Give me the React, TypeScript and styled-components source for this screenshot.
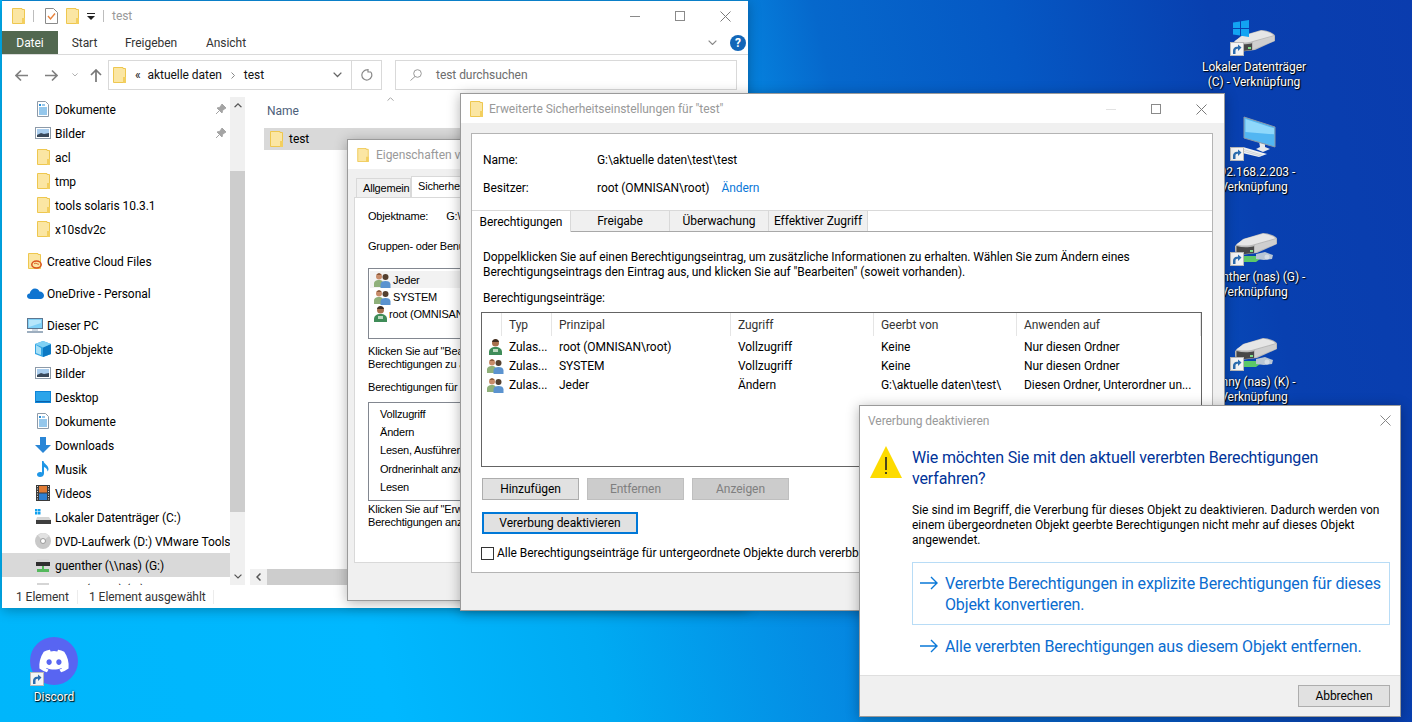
import React from "react";
import styled, { createGlobalStyle } from "styled-components";
import { FaDiscord } from "react-icons/fa6";

const Global = createGlobalStyle`
  html, body { margin: 0; padding: 0; height: 100%; overflow: hidden; }
  body { font-family: Roboto, "Noto Sans", sans-serif; font-size: 12px; color: #000; letter-spacing: -0.05px; }
  * { box-sizing: border-box; }
`;

const Desktop = styled.div`
  position: relative;
  width: 1412px;
  height: 722px;
  overflow: hidden;
  background: linear-gradient(77deg, #00b6fb 0%, #00b8ff 25%, #00aaf2 39%, #0585e0 56%, #0668cc 62%, #0558c4 74%, #0840b0 87%, #0a3cae 100%);
`;

const Win = styled.div<{ $x: number; $y: number; $w: number; $h: number }>`
  position: absolute;
  left: ${(p) => p.$x}px;
  top: ${(p) => p.$y}px;
  width: ${(p) => p.$w}px;
  height: ${(p) => p.$h}px;
  background: #fff;
  display: flex;
  flex-direction: column;
  overflow: hidden;
  box-shadow: 0 2px 12px rgba(0, 0, 0, 0.3);
`;

const ExplorerWin = styled(Win)`
  border-top: 1px solid #0a7fc8;
`;
const FramedWin = styled(Win)`
  border: 1px solid #9a9a9a;
`;

/* ---------- icons ---------- */
const Svg = styled.svg`
  display: block;
  flex: none;
`;

const Folder = ({ w = 13, h = 16 }: { w?: number; h?: number }) => (
  <Svg width={w} height={h} viewBox="0 0 13 16">
    <path d="M.5.5h9.500l0 1h2.500v14H.5z" fill="#fbe6a3" stroke="#eec74f" />
    <rect x="10" y="10" width="3" height="6" fill="#f3cf5f" />
  </Svg>
);

const TaskDoc = () => (
  <Svg width="13" height="16" viewBox="0 0 13 16">
    <path d="M.5.5h8l4 4v11H.5z" fill="#fff" stroke="#8a8a8a" />
    <path d="M3 8l2.500 3L10 5.500" fill="none" stroke="#e8823c" strokeWidth="1.400" />
  </Svg>
);

const DocIcon = () => (
  <Svg width="14" height="16" viewBox="0 0 14 16">
    <path d="M1.500.5h8l3 3v12h-11z" fill="#fff" stroke="#8d9aa8" />
    <path d="M6 4h3M3 7h8M3 9h8M3 11h8M3 13h8" stroke="#2b8fd8" />
    <path d="M3 3l2 2M3 5l2-2" stroke="#2b8fd8" />
  </Svg>
);

const PicIcon = () => (
  <Svg width="16" height="12" viewBox="0 0 16 12">
    <rect x=".5" y=".5" width="15" height="11" fill="#fff" stroke="#8d9aa8" />
    <rect x="2" y="2" width="12" height="8" fill="#a9cdee" />
    <path d="M2 8l4-2 3 1 5-1v4H2z" fill="#39485a" />
  </Svg>
);

const CloudIcon = () => (
  <Svg width="17" height="11" viewBox="0 0 17 11">
    <path d="M3.500 11C1.500 11 0 9.800 0 8.200c0-1.500 1-2.500 2.700-2.700C3.300 2.500 5.500.5 8 .5c2 0 3.800 1.200 4.500 3 2.500 0 4.500 1.800 4.500 4 0 2-1.500 3.500-3.500 3.500z" fill="#0f74d0" />
  </Svg>
);

const CcIcon = () => (
  <Svg width="14" height="16" viewBox="0 0 14 16">
    <path d="M.5.5h9.500v1h2.500v14H.5z" fill="#fbe6a3" stroke="#eec74f" />
    <ellipse cx="8.500" cy="11.500" rx="4.700" ry="3.500" fill="none" stroke="#d9531e" strokeWidth="1.500" />
    <path d="M6 11c2-2 4 1 5 0" fill="none" stroke="#d9531e" />
  </Svg>
);

const PcIcon = () => (
  <Svg width="16" height="15" viewBox="0 0 16 15">
    <rect x=".5" y=".5" width="15" height="10" fill="#7fd0f7" stroke="#5d7690" />
    <path d="M2 2h12v3L2 9z" fill="#b6e6fb" />
    <path d="M0 14h16" stroke="#7d93aa" strokeWidth="1.500" />
    <path d="M5 12h6" stroke="#9db2c6" />
  </Svg>
);

const CubeIcon = () => (
  <Svg width="16" height="16" viewBox="0 0 16 16">
    <path d="M8 0l8 3v10l-8 3-8-3V3z" fill="#35a5e3" />
    <path d="M8 6.500V16l8-3V3z" fill="#0c79c4" />
    <path d="M0 3l8 3.500L16 3 8 0z" fill="#7fd0f4" />
    <path d="M1 4v8l5 2V7z" fill="#a6e0f7" />
  </Svg>
);

const DesktopIcon = () => (
  <Svg width="16" height="12" viewBox="0 0 16 12">
    <rect width="16" height="12" fill="#0f85d8" />
    <rect x="1" y="1" width="14" height="9" fill="#2ba4ea" />
    <rect x="1" y="10" width="14" height="1" fill="#0b60a8" />
  </Svg>
);

const DownIcon = () => (
  <Svg width="16" height="16" viewBox="0 0 16 16">
    <path d="M5 0h6v8h5l-8 8-8-8h5z" fill="#2a86d6" />
  </Svg>
);

const MusicIcon = () => (
  <Svg width="12" height="16" viewBox="0 0 12 16">
    <path d="M5 0h1.500c.3 3 5 4 5 8 0 1-.5 2-1 2.500.2-2.500-2.200-4-3.500-4.500v6.500C7 15 5 16 3 16S0 15 0 13.500 1.500 11 3 11c.8 0 1.500.1 2 .4z" fill="#1f96e6" />
  </Svg>
);

const VideoIcon = () => (
  <Svg width="14" height="16" viewBox="0 0 14 16">
    <rect width="14" height="16" fill="#3a3a3a" />
    <rect x="3" y="1" width="8" height="6.500" fill="#e07b34" />
    <rect x="3" y="8.500" width="8" height="6.500" fill="#2f7fd0" />
    <path d="M1 1.500h1M1 4h1M1 6.500h1M1 9h1M1 11.500h1M1 14h1M12 1.500h1M12 4h1M12 6.500h1M12 9h1M12 11.500h1M12 14h1" stroke="#ddd" />
  </Svg>
);

const LocalDriveIcon = () => (
  <Svg width="16" height="16" viewBox="0 0 16 16">
    <path d="M0 0h2.500v2.500H0zM3 0h2.500v2.500H3zM0 3h2.500v2.500H0zM3 3h2.500v2.500H3z" fill="#10a0ee" />
    <path d="M2 8h12l2 3v4H1v-4z" fill="#d5d5d5" />
    <rect x="1" y="11" width="15" height="4" fill="#3e3e3e" />
  </Svg>
);

const DvdIcon = () => (
  <Svg width="16" height="16" viewBox="0 0 16 16">
    <circle cx="8" cy="8" r="8" fill="#c9c9c9" />
    <path d="M8 0a8 8 0 0 1 6 3L8 8 3 2.500A8 8 0 0 1 8 0z" fill="#e2e2e2" />
    <circle cx="8" cy="8" r="2.500" fill="#fff" stroke="#9a9a9a" />
  </Svg>
);

const NetDriveIcon = () => (
  <Svg width="16" height="16" viewBox="0 0 16 16">
    <rect x="2" y="2" width="12" height="3" fill="#d5d5d5" />
    <rect x="1" y="5" width="14" height="4" fill="#2f2f2f" />
    <path d="M7 9h2v3h5v3H2v-3h5z" fill="#54b85c" />
  </Svg>
);

const UsersIcon = () => (
  <Svg width="17" height="16" viewBox="0 0 17 16">
    <circle cx="5" cy="4.500" r="3" fill="#c88c6a" />
    <path d="M2.500 3c1-2.500 4-2.500 5 0z" fill="#8a5a3a" />
    <path d="M0 15v-3c0-3 2-4 5-4s4 1 4 4v3z" fill="#8fb07a" />
    <circle cx="11.500" cy="5" r="3" fill="#54402f" />
    <path d="M6.500 16v-3.500c0-2.500 2-3.500 5-3.500s5 1 5 3.500V16z" fill="#5b93cf" />
  </Svg>
);

const UserIcon = () => (
  <Svg width="13" height="16" viewBox="0 0 13 16">
    <circle cx="6.500" cy="4" r="3.500" fill="#a8704c" />
    <path d="M3 3c.5-4 6.500-4 7 0z" fill="#3e2c20" />
    <path d="M0 16v-3c0-3 2.500-5 6.500-5s6.500 2 6.500 5v3z" fill="#3f8c58" />
    <path d="M4 10h5v3H4z" fill="#bcd9c0" />
  </Svg>
);

const Arrow = ({ left }: { left?: boolean }) => (
  <Svg width="13" height="13" viewBox="0 0 13 13" style={left ? { transform: "scaleX(-1)" } : undefined}>
    <path d="M0 6.500h12M7 1.500l5 5-5 5" fill="none" stroke="#808080" strokeWidth="1.700" />
  </Svg>
);

const Chevron = ({ up, w = 9, color = "#666", sw = 1.3 }: { up?: boolean; w?: number; color?: string; sw?: number }) => (
  <Svg width={w} height={w * 0.6} viewBox="0 0 10 6" style={up ? { transform: "scaleY(-1)" } : undefined}>
    <path d="M.7.700L5 5l4.300-4.300" fill="none" stroke={color} strokeWidth={sw} />
  </Svg>
);

const Pin = () => (
  <Svg width="10" height="10" viewBox="0 0 10 10">
    <path d="M6 0l4 4-1 .5-2.500 2L6 9 1 4l2.500-.5L5.500 1zM3 7L0 10" fill="#a4a4a4" stroke="#a4a4a4" />
  </Svg>
);

const Close = ({ size = 11, color = "#7a7a7a" }: { size?: number; color?: string }) => (
  <Svg width={size} height={size} viewBox="0 0 11 11">
    <path d="M.5.500l10 10M10.500.500l-10 10" stroke={color} fill="none" />
  </Svg>
);

const Shortcut = () => (
  <Svg width="14" height="14" viewBox="0 0 14 14">
    <rect x=".5" y=".5" width="13" height="13" fill="#f4f4f4" stroke="#b9b9b9" />
    <path d="M5.500 12V8.500c0-1 .8-1.800 1.800-1.800H8V9l3.500-3.500L8 2.500v2.200H7C4.500 4.700 3 6.500 3 8.800V12z" fill="#2c6db0" />
  </Svg>
);

/* drive body drawn in a 42x22 box */
const DriveShape = () => (
  <>
    <path d="M0 13L8 6 28 0c5 0 14 3 14 6v5L22 20 5 22c-3 0-5-2-5-5z" fill="#b9b9b9" />
    <path d="M1 11.500L9 6 28 .8c4 .2 10 2 12.500 4.500L20 11c-6 2-14 2-19 .5z" fill="#e6e6e6" />
    <path d="M20 12L41 6v5L20 19.500z" fill="#cfcfcf" />
    <path d="M1.500 13c6 1.800 12.500 1.600 17.500.2V20L5 21.500c-2 0-3.500-1-3.500-3z" fill="#484848" />
    <rect x="15" y="17" width="3" height="2" fill="#7fe08a" />
  </>
);

const HddIcon = ({ win }: { win?: boolean }) => (
  <Svg width="50" height="39" viewBox="0 0 50 39">
    <g transform="translate(4 13)"><DriveShape /></g>
    {win && <path d="M4 5.500L11 4.500v6.500H4zM12 4.300L20 3v8h-8zM4 12h7v6.500L4 17.500zM12 12h8v8l-8-1.200z" fill="#12a4f2" />}
  </Svg>
);

const NetHddIcon = () => (
  <Svg width="50" height="36" viewBox="0 0 50 36">
    <g transform="translate(6 3)"><DriveShape /></g>
    <path d="M12 26h16l3-2v5l-4 3H14z" fill="#5cc868" />
    <path d="M27 24l9-2 8 3-1 4-8 1-8-1z" fill="#b7c5d4" />
    <circle cx="38" cy="27" r="2.500" fill="#d5dde6" />
  </Svg>
);

const MonitorIcon = () => (
  <Svg width="50" height="44" viewBox="0 0 50 44">
    <path d="M30 25l6 2v4l5 2-7 3-7-3 4-2z" fill="#e6e9ec" />
    <path d="M15 1l31 10v20L15 22z" fill="#52b6f2" stroke="#8a98a6" />
    <path d="M16.500 3L45 12.300v6L16.500 16z" fill="#8fd8fb" />
    <path d="M14 31l24 7-8 3-21-5z" fill="#eff1f3" />
    <path d="M13 33l20 6M11.500 34.500l20 5.500" stroke="#c2c8ce" strokeWidth=".7" />
  </Svg>
);

const Warn = () => (
  <Svg width="32" height="32" viewBox="0 0 32 32">
    <path d="M16 0l16 32H0z" fill="#fddb00" />
    <rect x="15.200" y="11" width="1.600" height="13" fill="#222" />
    <rect x="15.200" y="26" width="1.600" height="2" fill="#222" />
  </Svg>
);

const CmdArrow = () => (
  <Svg width="18" height="14" viewBox="0 0 18 14">
    <path d="M0 7h17M11 1l6 6-6 6" fill="none" stroke="#0a78d8" strokeWidth="1.400" />
  </Svg>
);

/* ---------- desktop icons ---------- */
const DeskItem = styled.div<{ $x: number; $y: number; $w?: number }>`
  position: absolute;
  left: ${(p) => p.$x}px;
  top: ${(p) => p.$y}px;
  width: ${(p) => p.$w ?? 124}px;
  display: flex;
  flex-direction: column;
  align-items: center;
`;
const DeskGlyph = styled.div<{ $w?: number; $h?: number }>`
  position: relative;
  width: ${(p) => p.$w ?? 50}px;
  height: ${(p) => p.$h ?? 44}px;
`;
const DeskOverlay = styled.div<{ $l: number; $t: number }>`
  position: absolute;
  left: ${(p) => p.$l}px;
  top: ${(p) => p.$t}px;
`;
const DeskLabel = styled.div`
  margin-top: 4px;
  color: #fff;
  text-align: center;
  line-height: 15px;
  white-space: nowrap;
  text-shadow: 1px 1px 1px #000, 0 0 2px rgba(0, 0, 0, 0.8);
`;
const DiscordDisc = styled.div`
  width: 48px;
  height: 48px;
  border-radius: 50%;
  background: #5865f2;
  color: #fff;
  display: flex;
  align-items: center;
  justify-content: center;
`;

/* ---------- explorer ---------- */
const TitleBar = styled.div`
  position: relative;
  height: 30px;
  flex: none;
  display: flex;
  align-items: center;
  color: #999;
  background: #fff;
`;
const QuickBar = styled.div`
  display: flex;
  align-items: center;
  padding-left: 10px;
  gap: 8px;
`;
const VSep = styled.div<{ $mr?: number }>`
  width: 1px;
  height: 12px;
  background: #bdbdbd;
  margin-right: ${(p) => p.$mr ?? 0}px;
`;
const Caption = styled.span<{ $ml?: number }>`
  color: #999;
  white-space: nowrap;
  margin-left: ${(p) => p.$ml ?? 0}px;
`;
const Controls = styled.div<{ $r: number; $gap: number }>`
  position: absolute;
  right: ${(p) => p.$r}px;
  top: 0;
  height: 30px;
  display: flex;
  align-items: center;
  gap: ${(p) => p.$gap}px;
`;
const MinBtn = styled.div<{ $faint?: boolean }>`
  width: 10px;
  height: 1px;
  background: ${(p) => (p.$faint ? "#e2e2e2" : "#8a8a8a")};
`;
const MaxBtn = styled.div`
  width: 10px;
  height: 10px;
  border: 1px solid #8a8a8a;
`;
const Ribbon = styled.div`
  position: relative;
  height: 24px;
  flex: none;
  display: flex;
  align-items: stretch;
  border-bottom: 1px solid #dadada;
`;
const RibbonTab = styled.div<{ $w: number; $active?: boolean }>`
  display: flex;
  align-items: center;
  justify-content: center;
  padding-top: 1px;
  width: ${(p) => p.$w}px;
  background: ${(p) => (p.$active ? "#526850" : "transparent")};
  color: ${(p) => (p.$active ? "#fff" : "#333")};
`;
const RibbonEnd = styled.div`
  margin-left: auto;
  display: flex;
  align-items: center;
  gap: 13px;
  padding-right: 2px;
`;
const Help = styled.div`
  width: 16px;
  height: 16px;
  border-radius: 50%;
  background: #1266b8;
  color: #fff;
  font-weight: 700;
  font-size: 12px;
  display: flex;
  align-items: center;
  justify-content: center;
`;
const AddressRow = styled.div`
  height: 42px;
  flex: none;
  display: flex;
  align-items: center;
  padding: 5px 11px 7px 13px;
`;
const NavBtn = styled.div<{ $w: number }>`
  width: ${(p) => p.$w}px;
  flex: none;
  display: flex;
  align-items: center;
`;
const AddressBox = styled.div`
  width: 274px;
  height: 30px;
  flex: none;
  margin-left: 1px;
  border: 1px solid #d9d9d9;
  display: flex;
  align-items: center;
  padding-left: 4px;
  color: #111;
`;
const Crumb = styled.span<{ $ml: number }>`
  margin-left: ${(p) => p.$ml}px;
  white-space: nowrap;
`;
const AddrEnd = styled.div`
  margin-left: auto;
  display: flex;
  height: 100%;
  align-items: center;
`;
const RefreshCell = styled.div`
  width: 30px;
  height: 100%;
  margin-left: 9px;
  border-left: 1px solid #d9d9d9;
  display: flex;
  align-items: center;
  justify-content: center;
`;
const SearchBox = styled.div`
  flex: 1;
  height: 30px;
  margin-left: 13px;
  border: 1px solid #d9d9d9;
  display: flex;
  align-items: center;
  padding-left: 14px;
  gap: 14px;
  color: #6d6d6d;
`;
const ExplorerBody = styled.div`
  flex: 1;
  min-height: 0;
  display: flex;
`;
const NavPane = styled.div`
  width: 228px;
  flex: none;
  overflow: hidden;
`;
const NavRow = styled.div<{ $level: number; $sel?: boolean; $space?: boolean }>`
  height: 24px;
  display: flex;
  align-items: center;
  position: relative;
  margin-top: ${(p) => (p.$space ? 8 : 0)}px;
  padding-left: ${(p) => (p.$level === 2 ? 33 : 25)}px;
  background: ${(p) => (p.$sel ? "#d9d9d9" : "transparent")};
  white-space: nowrap;
`;
const NavIcon = styled.div`
  width: 16px;
  margin-right: 4px;
  flex: none;
  display: flex;
  justify-content: center;
`;
const NavLabel = styled.span`
  padding-top: 1px;
`;
const PinSlot = styled.div`
  position: absolute;
  right: 4px;
  top: 7px;
`;
const VScroll = styled.div`
  width: 15px;
  flex: none;
  background: #f0f0f0;
  display: flex;
  flex-direction: column;
`;
const ScrollCap = styled.div`
  height: 17px;
  flex: none;
  display: flex;
  align-items: center;
  justify-content: center;
`;
const VThumb = styled.div`
  height: 341px;
  margin-top: 57px;
  background: #cdcdcd;
`;
const ScrollRest = styled.div`
  flex: 1;
`;
const MainPane = styled.div`
  flex: 1;
  margin-left: 5px;
  position: relative;
  display: flex;
  flex-direction: column;
`;
const NameHead = styled.div`
  height: 31px;
  padding: 0 0 4px 17px;
  display: flex;
  align-items: center;
  color: #4c607a;
`;
const SortMark = styled.div`
  position: absolute;
  left: 137px;
  top: 0;
`;
const FileRow = styled.div`
  height: 22px;
  margin-left: 14px;
  padding-left: 6px;
  display: flex;
  align-items: center;
  gap: 6px;
  background: #d9d9d9;
`;
const MainFill = styled.div`
  flex: 1;
`;
const HScroll = styled.div`
  height: 16px;
  background: #f0f0f0;
  display: flex;
  align-items: center;
`;
const HLeft = styled.div`
  width: 17px;
  display: flex;
  justify-content: center;
  flex: none;
`;
const HThumb = styled.div`
  flex: 1;
  height: 100%;
  background: #cdcdcd;
`;
const StatusBar = styled.div`
  height: 23px;
  flex: none;
  display: flex;
  align-items: center;
  color: #333;
`;
const StatusCell = styled.div<{ $w: number; $pl: number }>`
  width: ${(p) => p.$w}px;
  padding-left: ${(p) => p.$pl}px;
  border-right: 1px solid #ececec;
  height: 14px;
  line-height: 14px;
  white-space: nowrap;
`;

/* ---------- legacy properties ---------- */
const PropBody = styled.div`
  flex: 1;
  min-height: 0;
  background: #f0f0f0;
  padding: 7px 6px 0;
  font-family: "Liberation Sans", Arial, sans-serif;
  font-size: 11px;
  letter-spacing: -0.2px;
  display: flex;
  flex-direction: column;
`;
const PropTabs = styled.div`
  display: flex;
  height: 21px;
  align-items: flex-end;
  padding-left: 2px;
`;
const PropTab = styled.div<{ $w: number; $active?: boolean }>`
  width: ${(p) => p.$w}px;
  height: ${(p) => (p.$active ? 21 : 19)}px;
  background: ${(p) => (p.$active ? "#fff" : "#f0f0f0")};
  border: 1px solid #d9d9d9;
  border-bottom: none;
  display: flex;
  align-items: center;
  padding: 0 0 ${(p) => (p.$active ? 3 : 1)}px 6px;
`;
const PropPanel = styled.div`
  height: 366px;
  background: #fff;
  border: 1px solid #d9d9d9;
  padding: 12px 13px;
`;
const PropLine = styled.div<{ $mt?: number }>`
  margin-top: ${(p) => p.$mt ?? 0}px;
  line-height: 13px;
  white-space: nowrap;
`;
const PropField = styled.span`
  margin-left: 18px;
`;
const PropList = styled.div<{ $h: number; $mt: number }>`
  height: ${(p) => p.$h}px;
  margin-top: ${(p) => p.$mt}px;
  border: 1px solid #828790;
  padding: 2px 1px;
`;
const PropListRow = styled.div<{ $sel?: boolean }>`
  height: 17px;
  display: flex;
  align-items: center;
  gap: 2px;
  padding-left: 4px;
  background: ${(p) => (p.$sel ? "#f2f2f2" : "transparent")};
`;
const PermRow = styled.div`
  height: 18.2px;
  line-height: 18px;
  padding-left: 10px;
`;

/* ---------- advanced ---------- */
const DlgBody = styled.div`
  flex: 1;
  min-height: 0;
  background: #f0f0f0;
  padding: 10px 11px 0 10px;
`;
const AdvPanel = styled.div`
  height: 440px;
  background: #fff;
  border: 1px solid #b4b4b4;
  position: relative;
`;
const InfoBlock = styled.div`
  height: 76px;
  padding: 12px 0 0 11px;
`;
const InfoRow = styled.div`
  height: 28px;
  display: flex;
  align-items: center;
`;
const InfoKey = styled.div`
  width: 114px;
`;
const Link = styled.span`
  color: #0a78d8;
  margin-left: 12px;
`;
const AdvTabs = styled.div`
  height: 22px;
  display: flex;
  border-top: 1px solid #d9d9d9;
  border-bottom: 1px solid #a8a8a8;
`;
const AdvTab = styled.div<{ $active?: boolean }>`
  width: 99px;
  height: ${(p) => (p.$active ? 21 : 20)}px;
  background: ${(p) => (p.$active ? "#fff" : "#f0f0f0")};
  border-right: 1px solid #d9d9d9;
  display: flex;
  align-items: center;
  justify-content: center;
  white-space: nowrap;
  z-index: 1;
`;
const AdvContent = styled.div`
  padding: 18px 11px 0 11px;
`;
const Para = styled.div`
  line-height: 15px;
  white-space: nowrap;
`;
const SubHead = styled.div`
  margin-top: 11px;
  line-height: 15px;
`;
const AclTable = styled.div`
  margin: 6px 0 0 -2px;
  width: 721px;
  height: 155px;
  border: 1px solid #646464;
`;
const AclRow = styled.div<{ $head?: boolean }>`
  display: grid;
  grid-template-columns: 20px 50px 179px 143px 143px 1fr;
  height: ${(p) => (p.$head ? 23 : 19)}px;
  align-items: center;
  white-space: nowrap;
  margin-bottom: ${(p) => (p.$head ? 1 : 0)}px;
`;
const AclHead = styled.div`
  height: 100%;
  padding-left: 7px;
  display: flex;
  align-items: center;
  border-right: 1px solid #e5e5e5;
  color: #333;
`;
const AclCell = styled.div`
  padding-left: 7px;
  overflow: hidden;
`;
const AclIcon = styled.div`
  display: flex;
  justify-content: center;
  padding-left: 6px;
`;
const BtnRow = styled.div`
  display: flex;
  gap: 8px;
  margin: 11px 0 0 -1px;
`;
const Btn = styled.div<{ $w: number; $disabled?: boolean }>`
  width: ${(p) => p.$w}px;
  height: 22px;
  display: flex;
  align-items: center;
  justify-content: center;
  background: ${(p) => (p.$disabled ? "#cccccc" : "#e1e1e1")};
  border: 1px solid ${(p) => (p.$disabled ? "#bfbfbf" : "#adadad")};
  color: ${(p) => (p.$disabled ? "#7f7f7f" : "#000")};
  white-space: nowrap;
`;
const FocusBtn = styled(Btn)`
  border: 2px solid #0078d7;
  margin: 12px 0 0 -1px;
`;
const CheckRow = styled.div`
  display: flex;
  align-items: center;
  gap: 3px;
  margin: 12px 0 0 -2px;
  white-space: nowrap;
`;
const CheckBox = styled.div`
  width: 13px;
  height: 13px;
  border: 1px solid #333;
  background: #fff;
`;

/* ---------- inherit dialog ---------- */
const DlgTitle = styled.div<{ $pl?: number }>`
  position: relative;
  height: 29px;
  flex: none;
  display: flex;
  align-items: center;
  padding-left: ${(p) => p.$pl ?? 8}px;
`;
const DlgClose = styled.div`
  position: absolute;
  right: 9px;
  top: 9px;
`;
const DlgMain = styled.div`
  flex: 1;
  display: flex;
  padding: 11px 10px 0 10px;
  gap: 10px;
`;
const DlgText = styled.div`
  flex: 1;
  min-width: 0;
`;
const Heading = styled.div`
  font-size: 16px;
  line-height: 21px;
  letter-spacing: -0.14px;
  color: #003399;
  padding-top: 1px;
`;
const DlgPara = styled.div`
  margin-top: 14px;
  line-height: 15px;
  letter-spacing: 0;
`;
const CmdLink = styled.div<{ $hover?: boolean }>`
  display: flex;
  align-items: flex-start;
  gap: 7px;
  padding: 10px 7px 9px 7px;
  font-size: 16px;
  line-height: 21px;
  letter-spacing: -0.14px;
  color: #0a6ccf;
  border: 1px solid ${(p) => (p.$hover ? "#b8dcf6" : "transparent")};
`;
const CmdArrowSlot = styled.div`
  padding-top: 3px;
  flex: none;
`;
const CmdWrap = styled.div`
  margin-top: 14px;
  display: flex;
  flex-direction: column;
`;
const DlgFoot = styled.div`
  height: 41px;
  flex: none;
  background: #f0f0f0;
  border-top: 1px solid #dfdfdf;
  display: flex;
  align-items: center;
  justify-content: flex-end;
  padding-right: 10px;
`;

const navItems: [string, React.ReactNode, number, boolean?, boolean?, boolean?][] = [
  ["Dokumente", <DocIcon />, 2, false, true],
  ["Bilder", <PicIcon />, 2, false, true],
  ["acl", <Folder />, 2],
  ["tmp", <Folder />, 2],
  ["tools solaris 10.3.1", <Folder />, 2],
  ["x10sdv2c", <Folder />, 2],
  ["Creative Cloud Files", <CcIcon />, 1, true],
  ["OneDrive - Personal", <CloudIcon />, 1, true],
  ["Dieser PC", <PcIcon />, 1, true],
  ["3D-Objekte", <CubeIcon />, 2],
  ["Bilder", <PicIcon />, 2],
  ["Desktop", <DesktopIcon />, 2],
  ["Dokumente", <DocIcon />, 2],
  ["Downloads", <DownIcon />, 2],
  ["Musik", <MusicIcon />, 2],
  ["Videos", <VideoIcon />, 2],
  ["Lokaler Datenträger (C:)", <LocalDriveIcon />, 2],
  ["DVD-Laufwerk (D:) VMware Tools", <DvdIcon />, 2],
  ["guenther (\\\\nas) (G:)", <NetDriveIcon />, 2, false, false, true],
  ["jenny (\\\\nas) (K:)", <NetDriveIcon />, 2],
];

const acl: [React.ReactNode, string, string, string, string, string][] = [
  [<UserIcon />, "Zulas...", "root (OMNISAN\\root)", "Vollzugriff", "Keine", "Nur diesen Ordner"],
  [<UsersIcon />, "Zulas...", "SYSTEM", "Vollzugriff", "Keine", "Nur diesen Ordner"],
  [<UsersIcon />, "Zulas...", "Jeder", "Ändern", "G:\\aktuelle daten\\test\\", "Diesen Ordner, Unterordner un..."],
];

const Explorer = () => (
  <ExplorerWin $x={2} $y={0} $w={746} $h={608}>
    <TitleBar>
      <QuickBar>
        <Folder />
        <VSep $mr={3} />
        <TaskDoc />
        <Folder />
        <Svg width="8" height="7" viewBox="0 0 8 7">
          <path d="M0 0h8v1H0zM0 3h8L4 7z" fill="#222" />
        </Svg>
        <VSep />
        <Caption>test</Caption>
      </QuickBar>
      <Controls $r={17} $gap={35}>
        <MinBtn />
        <MaxBtn />
        <Close />
      </Controls>
    </TitleBar>
    <Ribbon>
      <RibbonTab $w={56} $active>Datei</RibbonTab>
      <RibbonTab $w={53}>Start</RibbonTab>
      <RibbonTab $w={80}>Freigeben</RibbonTab>
      <RibbonTab $w={70}>Ansicht</RibbonTab>
      <RibbonEnd>
        <Chevron w={9} color="#888" />
        <Help>?</Help>
      </RibbonEnd>
    </Ribbon>
    <AddressRow>
      <NavBtn $w={30}><Arrow left /></NavBtn>
      <NavBtn $w={27}><Arrow /></NavBtn>
      <NavBtn $w={18}><Chevron w={6} color="#999" /></NavBtn>
      <NavBtn $w={17}>
        <Svg width="12" height="13" viewBox="0 0 12 13">
          <path d="M6 13V1M1 6l5-5 5 5" fill="none" stroke="#777" strokeWidth="1.700" />
        </Svg>
      </NavBtn>
      <AddressBox>
        <Folder />
        <Crumb $ml={9}>«</Crumb>
        <Crumb $ml={7}>aktuelle daten</Crumb>
        <Crumb $ml={9}>
          <Svg width="4" height="7" viewBox="0 0 4 7" style={{ display: "inline-block" }}>
            <path d="M.5.500L3.500 3.500.5 6.500" fill="none" stroke="#888" />
          </Svg>
        </Crumb>
        <Crumb $ml={9}>test</Crumb>
        <AddrEnd>
          <Chevron w={9} color="#666" sw={1.5} />
          <RefreshCell>
            <Svg width="12" height="12" viewBox="0 0 12 12">
              <path d="M9.800 3a5 5 0 1 1-2.300-1.700M7 0v3h3" fill="none" stroke="#888" strokeWidth="1.200" />
            </Svg>
          </RefreshCell>
        </AddrEnd>
      </AddressBox>
      <SearchBox>
        <Svg width="12" height="12" viewBox="0 0 12 12">
          <circle cx="7.500" cy="4.500" r="3.800" fill="none" stroke="#999" />
          <path d="M5 7.500L.5 11.500" stroke="#999" />
        </Svg>
        <span>test durchsuchen</span>
      </SearchBox>
    </AddressRow>
    <ExplorerBody>
      <NavPane>
        {navItems.map(([label, icon, level, space, pin, sel], i) => (
          <NavRow key={i} $level={level} $space={space} $sel={sel}>
            <NavIcon>{icon}</NavIcon>
            <NavLabel>{label}</NavLabel>
            {pin && <PinSlot><Pin /></PinSlot>}
          </NavRow>
        ))}
      </NavPane>
      <VScroll>
        <ScrollCap><Chevron up w={8} color="#555" sw={1.5} /></ScrollCap>
        <VThumb />
        <ScrollRest />
        <ScrollCap><Chevron w={8} color="#555" sw={1.5} /></ScrollCap>
      </VScroll>
      <MainPane>
        <SortMark><Chevron up w={7} color="#999" /></SortMark>
        <NameHead>Name</NameHead>
        <FileRow>
          <Folder />
          test
        </FileRow>
        <MainFill />
        <HScroll>
          <HLeft>
            <Svg width="5" height="8" viewBox="0 0 5 8">
              <path d="M4.500.5L1 4l3.500 3.500" fill="none" stroke="#555" strokeWidth="1.500" />
            </Svg>
          </HLeft>
          <HThumb />
        </HScroll>
      </MainPane>
    </ExplorerBody>
    <StatusBar>
      <StatusCell $w={76} $pl={14}>1 Element</StatusCell>
      <StatusCell $w={136} $pl={11}>1 Element ausgewählt</StatusCell>
    </StatusBar>
  </ExplorerWin>
);

const Properties = () => (
  <FramedWin $x={347} $y={139} $w={400} $h={462}>
    <DlgTitle $pl={9}>
      <Folder w={12} h={14} />
      <Caption $ml={7}>Eigenschaften von test</Caption>
    </DlgTitle>
    <PropBody>
      <PropTabs>
        <PropTab $w={55}>Allgemein</PropTab>
        <PropTab $w={70} $active>Sicherheit</PropTab>
      </PropTabs>
      <PropPanel>
        <PropLine $mt={0}>Objektname:<PropField>G:\aktuelle daten\test\test</PropField></PropLine>
        <PropLine $mt={17}>Gruppen- oder Benutzernamen:</PropLine>
        <PropList $h={71} $mt={15}>
          <PropListRow $sel><UsersIcon />Jeder</PropListRow>
          <PropListRow><UsersIcon />SYSTEM</PropListRow>
          <PropListRow><UserIcon />root (OMNISAN\root)</PropListRow>
        </PropList>
        <PropLine $mt={6}>Klicken Sie auf "Bearbeiten", um die</PropLine>
        <PropLine>Berechtigungen zu ändern.</PropLine>
        <PropLine $mt={10}>Berechtigungen für Jeder</PropLine>
        <PropList $h={99} $mt={8}>
          <PermRow>Vollzugriff</PermRow>
          <PermRow>Ändern</PermRow>
          <PermRow>Lesen, Ausführen</PermRow>
          <PermRow>Ordnerinhalt anzeigen</PermRow>
          <PermRow>Lesen</PermRow>
        </PropList>
        <PropLine $mt={2}>Klicken Sie auf "Erweitert", um spezielle</PropLine>
        <PropLine>Berechtigungen anzuzeigen.</PropLine>
      </PropPanel>
    </PropBody>
  </FramedWin>
);

const Advanced = () => (
  <FramedWin $x={460} $y={93} $w={765} $h={518}>
    <DlgTitle $pl={9}>
      <Folder />
      <Caption $ml={6}>Erweiterte Sicherheitseinstellungen für "test"</Caption>
      <Controls $r={17} $gap={35}>
        <MinBtn $faint />
        <MaxBtn />
        <Close />
      </Controls>
    </DlgTitle>
    <DlgBody>
      <AdvPanel>
        <InfoBlock>
          <InfoRow><InfoKey>Name:</InfoKey>G:\aktuelle daten\test\test</InfoRow>
          <InfoRow><InfoKey>Besitzer:</InfoKey>root (OMNISAN\root)<Link>Ändern</Link></InfoRow>
        </InfoBlock>
        <AdvTabs>
          <AdvTab $active>Berechtigungen</AdvTab>
          <AdvTab>Freigabe</AdvTab>
          <AdvTab>Überwachung</AdvTab>
          <AdvTab>Effektiver Zugriff</AdvTab>
        </AdvTabs>
        <AdvContent>
          <Para>Doppelklicken Sie auf einen Berechtigungseintrag, um zusätzliche Informationen zu erhalten. Wählen Sie zum Ändern eines</Para>
          <Para>Berechtigungseintrags den Eintrag aus, und klicken Sie auf "Bearbeiten" (soweit vorhanden).</Para>
          <SubHead>Berechtigungseinträge:</SubHead>
          <AclTable>
            <AclRow $head>
              <AclHead />
              <AclHead>Typ</AclHead>
              <AclHead>Prinzipal</AclHead>
              <AclHead>Zugriff</AclHead>
              <AclHead>Geerbt von</AclHead>
              <AclHead>Anwenden auf</AclHead>
            </AclRow>
            {acl.map(([icon, ...cells], i) => (
              <AclRow key={i}>
                <AclIcon>{icon}</AclIcon>
                {cells.map((c, j) => <AclCell key={j}>{c}</AclCell>)}
              </AclRow>
            ))}
          </AclTable>
          <BtnRow>
            <Btn $w={97}>Hinzufügen</Btn>
            <Btn $w={97} $disabled>Entfernen</Btn>
            <Btn $w={97} $disabled>Anzeigen</Btn>
          </BtnRow>
          <FocusBtn $w={156}>Vererbung deaktivieren</FocusBtn>
          <CheckRow>
            <CheckBox />
            Alle Berechtigungseinträge für untergeordnete Objekte durch vererbbare Berechtigungseinträge von diesem Objekt ersetzen
          </CheckRow>
        </AdvContent>
      </AdvPanel>
    </DlgBody>
  </FramedWin>
);

const InheritDialog = () => (
  <FramedWin $x={859} $y={405} $w={542} $h={312}>
    <DlgTitle>
      <Caption>Vererbung deaktivieren</Caption>
      <DlgClose><Close size={11} color="#888" /></DlgClose>
    </DlgTitle>
    <DlgMain>
      <Warn />
      <DlgText>
        <Heading>Wie möchten Sie mit den aktuell vererbten Berechtigungen<br />verfahren?</Heading>
        <DlgPara>
          Sie sind im Begriff, die Vererbung für dieses Objekt zu deaktivieren. Dadurch werden von<br />
          einem übergeordneten Objekt geerbte Berechtigungen nicht mehr auf dieses Objekt<br />
          angewendet.
        </DlgPara>
        <CmdWrap>
          <CmdLink $hover>
            <CmdArrowSlot><CmdArrow /></CmdArrowSlot>
            <div>Vererbte Berechtigungen in explizite Berechtigungen für dieses<br />Objekt konvertieren.</div>
          </CmdLink>
          <CmdLink>
            <CmdArrowSlot><CmdArrow /></CmdArrowSlot>
            <div>Alle vererbten Berechtigungen aus diesem Objekt entfernen.</div>
          </CmdLink>
        </CmdWrap>
      </DlgText>
    </DlgMain>
    <DlgFoot>
      <Btn $w={92}>Abbrechen</Btn>
    </DlgFoot>
  </FramedWin>
);

export default function App() {
  return (
    <Desktop>
      <Global />
      <DeskItem $x={1192} $y={17}>
        <DeskGlyph $h={39}>
          <HddIcon win />
          <DeskOverlay $l={1} $t={25}><Shortcut /></DeskOverlay>
        </DeskGlyph>
        <DeskLabel>Lokaler Datenträger<br />(C) - Verknüpfung</DeskLabel>
      </DeskItem>
      <DeskItem $x={1192} $y={116}>
        <DeskGlyph $h={45}>
          <MonitorIcon />
          <DeskOverlay $l={1} $t={31}><Shortcut /></DeskOverlay>
        </DeskGlyph>
        <DeskLabel>192.168.2.203 -<br />Verknüpfung</DeskLabel>
      </DeskItem>
      <DeskItem $x={1192} $y={230}>
        <DeskGlyph $h={36}>
          <NetHddIcon />
          <DeskOverlay $l={1} $t={22}><Shortcut /></DeskOverlay>
        </DeskGlyph>
        <DeskLabel>guenther (nas) (G) -<br />Verknüpfung</DeskLabel>
      </DeskItem>
      <DeskItem $x={1192} $y={335}>
        <DeskGlyph $h={36}>
          <NetHddIcon />
          <DeskOverlay $l={1} $t={22}><Shortcut /></DeskOverlay>
        </DeskGlyph>
        <DeskLabel>jenny (nas) (K) -<br />Verknüpfung</DeskLabel>
      </DeskItem>
      <DeskItem $x={4} $y={637} $w={100}>
        <DeskGlyph $w={48} $h={49}>
          <DiscordDisc><FaDiscord size={32} /></DiscordDisc>
          <DeskOverlay $l={0} $t={35}><Shortcut /></DeskOverlay>
        </DeskGlyph>
        <DeskLabel>Discord</DeskLabel>
      </DeskItem>
      <Explorer />
      <Properties />
      <Advanced />
      <InheritDialog />
    </Desktop>
  );
}
